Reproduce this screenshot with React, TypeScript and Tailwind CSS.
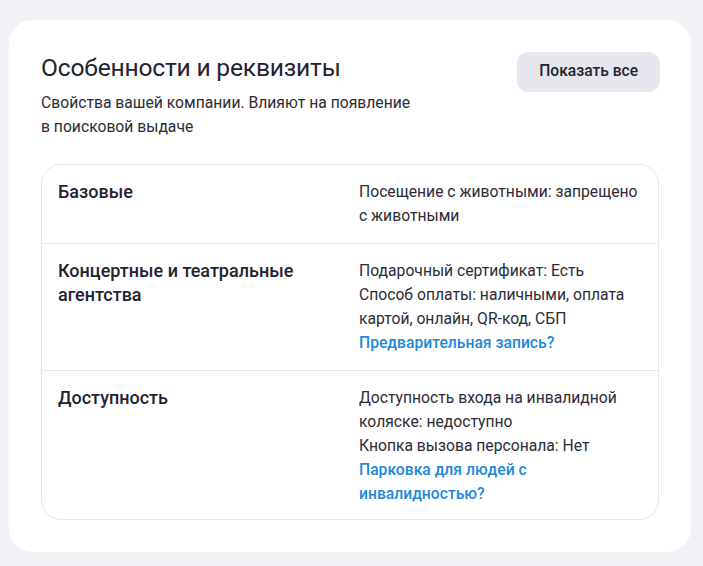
import React from "react";

const font = { fontFamily: "Roboto, 'Noto Sans', sans-serif" };

const Row: React.FC<{ title: React.ReactNode; children: React.ReactNode; last?: boolean }> = ({ title, children, last }) => (
    <div className={`flex px-4 ${last ? "pt-[15px] pb-[13px]" : "py-[15px] border-b border-[#e6e7ea]"}`}>
        <div className="w-[301px] pr-6 text-[18px] leading-6 font-medium text-[#23232f]">{title}</div>
        <div className="flex-1 text-[15.7px] leading-6 text-[#2b2b36]">{children}</div>
    </div>
);

const App: React.FC = () => {
    return (
        <div className="w-[703px] h-[566px] bg-[#f1f2f5] pt-5 pl-[9px] pr-3" style={font}>
            <div className="w-[682px] h-[532px] bg-white rounded-[24px] px-8 pt-[32px]">
                <div className="flex justify-between">
                    <div>
                        <h2 className="text-[24.6px] leading-8 text-[#23232f] tracking-[-0.2px]">Особенности и реквизиты</h2>
                        <p className="mt-[7px] text-[15.7px] leading-6 text-[#2b2b36]">
                            Свойства вашей компании. Влияют на появление
                            <br />
                            в поисковой выдаче
                        </p>
                    </div>
                    <button className="h-10 px-[22px] mt-0 mr-[-1px] rounded-xl bg-[#e5e6ee] text-[15.6px] font-medium text-[#23232f]">
                        Показать все
                    </button>
                </div>
                <div className="mt-[25px] border border-[#e6e7ea] rounded-[20px]">
                    <Row title="Базовые">
                        Посещение с животными: запрещено
                        <br />с животными
                    </Row>
                    <Row title={<>Концертные и театральные<br />агентства</>}>
                        Подарочный сертификат: Есть
                        <br />
                        Способ оплаты: наличными, оплата
                        <br />
                        картой, онлайн, QR-код, СБП
                        <br />
                        <span className="font-medium text-[#1f88da]">Предварительная запись?</span>
                    </Row>
                    <Row title="Доступность" last>
                        Доступность входа на инвалидной
                        <br />
                        коляске: недоступно
                        <br />
                        Кнопка вызова персонала: Нет
                        <br />
                        <span className="font-medium text-[#1f88da]">
                            Парковка для людей с
                            <br />
                            инвалидностью?
                        </span>
                    </Row>
                </div>
            </div>
        </div>
    );
};

export default App;
